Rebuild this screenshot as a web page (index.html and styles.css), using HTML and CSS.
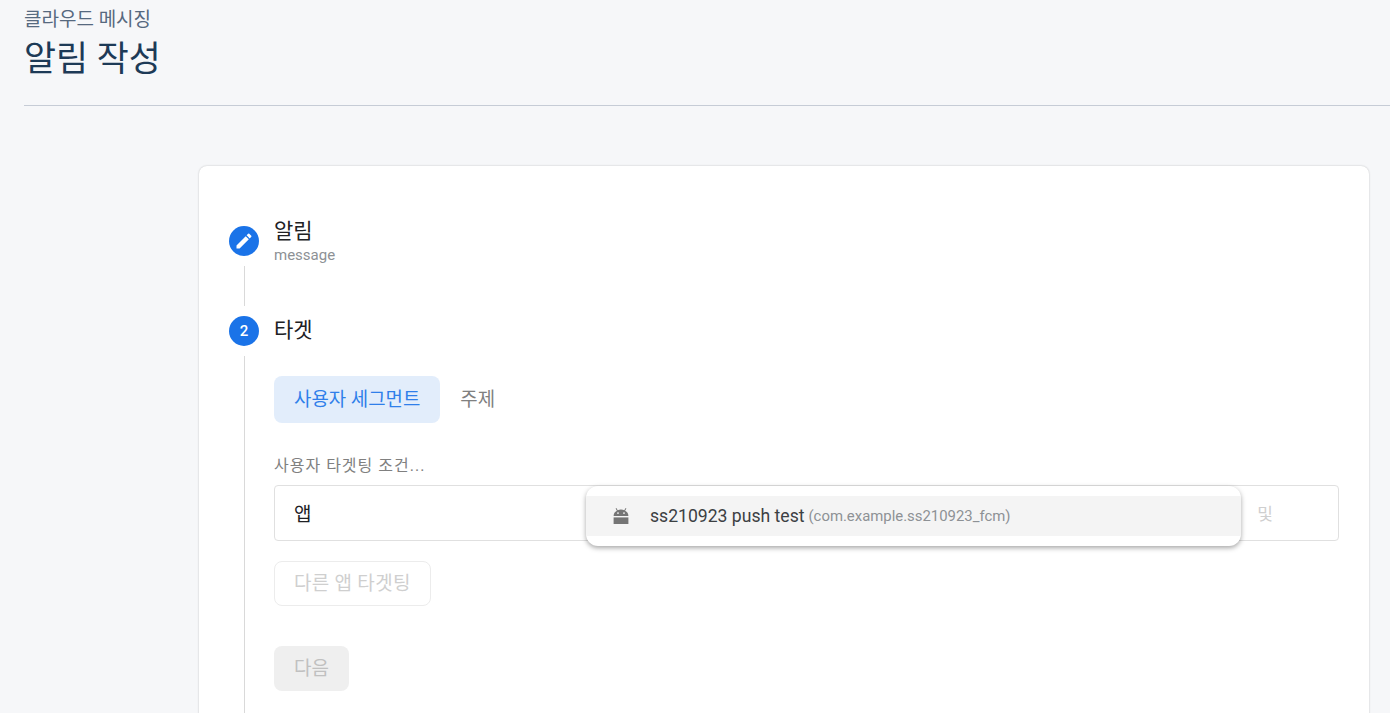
FILE: index.html
```html
<!DOCTYPE html>
<html lang="ko">
<head>
<meta charset="utf-8">
<title>알림 작성</title>
<link rel="stylesheet" href="styles.css">
</head>
<body>
<header class="page-header">
  <div class="product">클라우드 메시징</div>
  <h1 class="page-title">알림 작성</h1>
</header>
<main class="content">
  <section class="card">
    <div class="step step-first">
      <div class="rail">
        <div class="badge">
          <svg class="badge-icon" viewBox="0 0 24 24" aria-hidden="true"><path d="M3 17.25V21h3.75L17.81 9.94l-3.75-3.75L3 17.25zM20.71 7.04a1 1 0 0 0 0-1.41l-2.34-2.34a1 1 0 0 0-1.41 0l-1.83 1.83 3.75 3.75 1.83-1.83z"/></svg>
        </div>
        <div class="rail-line"></div>
      </div>
      <div class="step-body">
        <div class="step-title">알림</div>
        <div class="step-sub">message</div>
      </div>
    </div>
    <div class="step">
      <div class="rail">
        <div class="badge">2</div>
        <div class="rail-line"></div>
      </div>
      <div class="step-body">
        <div class="step-title">타겟</div>
        <div class="tabs">
          <div class="tab tab-active">사용자 세그먼트</div>
          <div class="tab">주제</div>
        </div>
        <div class="field-label">사용자 타겟팅 조건...</div>
        <div class="condition">
          <span class="condition-name">앱</span>
          <span class="condition-and">및</span>
          <div class="dropdown">
            <div class="option">
              <svg class="android" viewBox="0 0 16 16" aria-hidden="true"><path d="M3.4 0l1.3 2.3A7.4 7.4 0 0 1 8 1.6c1.2 0 2.3.3 3.3.7L12.6 0l.8.4-1.3 2.4A6 6 0 0 1 15.4 8H.6a6 6 0 0 1 3.3-5.2L2.6.4zM5 4.2a.9.9 0 1 0 0 1.8.9.9 0 0 0 0-1.8zm6 0a.9.9 0 1 0 0 1.8.9.9 0 0 0 0-1.8z"/><path d="M.6 9.4h14.8V16H.6z"/></svg>
              <span class="option-name">ss210923 push test</span>
              <span class="option-id">(com.example.ss210923_fcm)</span>
            </div>
          </div>
        </div>
        <div class="other-app">다른 앱 타겟팅</div>
        <div class="next">다음</div>
      </div>
    </div>
  </section>
</main>
</body>
</html>
```
FILE: styles.css
```css
html, body {
  margin: 0;
  height: 713px;
  overflow: hidden;
}
body {
  background: #f6f7f9;
  font-family: Roboto, "Noto Sans CJK KR", sans-serif;
  color: #202124;
}
.page-header {
  margin-left: 24px;
  height: 105px;
  border-bottom: 1px solid #c6ccd6;
}
.product {
  font-size: 19px;
  line-height: 24px;
  padding-top: 8px;
  color: #56697f;
}
.page-title {
  margin: 0;
  padding-top: 3px;
  font-size: 34.8px;
  font-weight: 400;
  line-height: 48px;
  color: #1d3a57;
}
.content {
  padding: 60px 21px 0 199px;
}
.card {
  background: #fff;
  border-radius: 8px;
  box-shadow: 0 0 2px rgba(0, 0, 0, .24);
  padding: 60px 30px 0;
  height: 580px;
  overflow: hidden;
}
.step {
  display: flex;
  gap: 15px;
}
.step-first {
  height: 90px;
}
.rail {
  width: 30px;
  display: flex;
  flex-direction: column;
  align-items: center;
}
.badge {
  width: 30px;
  height: 30px;
  flex: none;
  border-radius: 50%;
  background: #1a73e8;
  color: #fff;
  font-size: 15px;
  font-weight: 500;
  display: flex;
  align-items: center;
  justify-content: center;
}
.badge-icon {
  width: 20px;
  height: 20px;
  fill: #fff;
}
.rail-line {
  width: 1px;
  flex: 1;
  margin: 10px 0;
  background: #d9d9d9;
}
.step-body {
  flex: 1;
  min-width: 0;
  padding-bottom: 60px;
}
.step-title {
  font-size: 21px;
  line-height: 30px;
  margin-top: -10px;
  color: #202124;
}
.step + .step .step-title {
  margin-top: -1px;
}
.step-sub {
  font-size: 15px;
  line-height: 18px;
  color: #8d9195;
}
.tabs {
  display: flex;
  margin-top: 31px;
}
.tab {
  height: 47px;
  line-height: 48px;
  padding: 0 20px;
  font-size: 18.9px;
  color: #808080;
  border-radius: 8px;
}
.tab-active {
  background: #e2edfb;
  color: #2f7fea;
}
.field-label {
  margin-top: 32px;
  font-size: 16px;
  letter-spacing: 1px;
  line-height: 22px;
  color: #808080;
}
.condition {
  position: relative;
  margin-top: 8px;
  height: 54px;
  border: 1px solid #e0e0e0;
  border-radius: 4px;
  display: flex;
  align-items: center;
  justify-content: space-between;
  padding: 0 65px 0 19px;
}
.condition-name {
  font-size: 19px;
  margin-top: -2px;
  color: #202124;
}
.condition-and {
  font-size: 17px;
  margin-top: -2px;
  color: #cfcfcf;
}
.dropdown {
  position: absolute;
  left: 311px;
  top: 0;
  width: 655px;
  height: 60px;
  padding-top: 10px;
  box-sizing: border-box;
  background: #fff;
  border-radius: 12px;
  box-shadow: 0 2px 5px rgba(0, 0, 0, .35);
}
.option {
  height: 40px;
  background: #f4f4f4;
  display: flex;
  align-items: center;
  padding-left: 27px;
}
.android {
  width: 16px;
  height: 16px;
  fill: #757575;
  margin-right: 21px;
}
.option-name {
  font-size: 17.6px;
  color: #3c4043;
  margin-right: 4px;
}
.option-id {
  font-size: 14.9px;
  color: #8d9195;
}
.other-app {
  margin-top: 20px;
  width: fit-content;
  height: 43px;
  line-height: 43px;
  padding: 0 19px;
  font-size: 19px;
  letter-spacing: .3px;
  color: #cfcfcf;
  border: 1px solid #ececec;
  border-radius: 8px;
}
.next {
  margin-top: 40px;
  width: fit-content;
  height: 45px;
  line-height: 45px;
  padding: 0 20px;
  font-size: 19px;
  color: #c0c0c0;
  background: #efefef;
  border-radius: 8px;
}
```
